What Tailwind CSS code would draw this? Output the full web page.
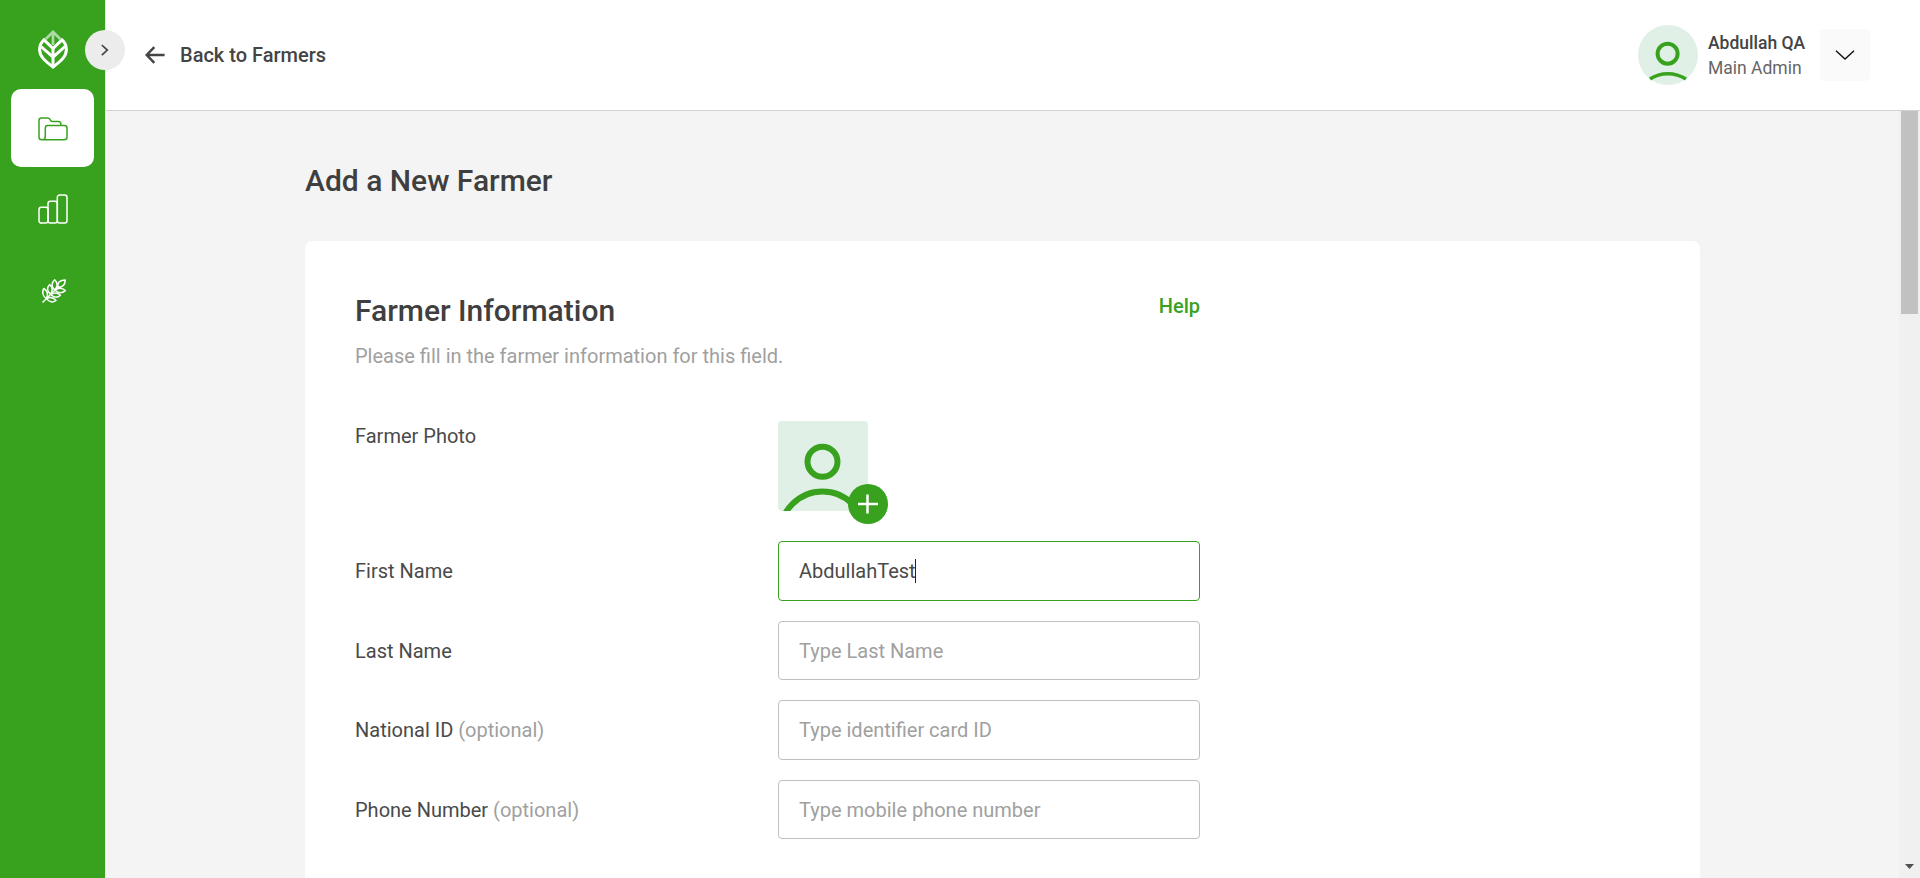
<!DOCTYPE html>
<html lang="en">
<head>
<meta charset="utf-8">
<title>Add a New Farmer</title>
<script src="https://cdn.jsdelivr.net/npm/@tailwindcss/browser@4"></script>
</head>
<body class="font-[Roboto,sans-serif] text-xl/[30px] text-[#4a4a4a] bg-[#f4f4f4]">
<div class="flex h-[878px] w-[1920px] overflow-hidden">
  <aside class="relative z-10 flex w-[106px] shrink-0 flex-col items-center border-r border-[#e8e8e8] bg-[#38a21f]">
    <svg class="mt-[30px] h-[39px] w-[30px] shrink-0" viewBox="0 0 30 39" fill="none" stroke="#fff" stroke-width="3">
      <path d="M15 2V15M7.800 9 15 1.900 22.200 9" stroke="#afdaa5" stroke-width="2.700"/>
      <path d="M15 37C7 31 1.600 26.500 1.600 19.500c0-4 1.500-7 4.400-9.600L15 18.500l9-8.600c2.900 2.600 4.400 5.600 4.400 9.600C28.400 26.500 23 31 15 37z"/>
      <path d="M15 17v20M3 16.500l12 10.700 12-10.700"/>
    </svg>
    <button class="absolute left-[85px] top-[30px] flex size-10 items-center justify-center rounded-full bg-[#ececec]" aria-label="Expand">
      <svg class="size-4" viewBox="0 0 16 16" fill="none" stroke="#444" stroke-width="1.700"><path d="M4.800 3 10.300 8.100 4.800 13.200"/></svg>
    </button>
    <nav class="mt-5 flex flex-col items-center gap-[3px]">
      <a class="flex h-[78px] w-[83px] items-center justify-center rounded-[10px] bg-white pt-px">
        <svg class="h-6 w-[30px]" viewBox="0 0 30 24" fill="none" stroke="#38a21f" stroke-width="1.500" stroke-linejoin="round">
          <path d="M22.800 8V6.700Q22.800 4.500 20.600 4.500H14.500Q12.800 4.500 12.300 3L11.800 2.200Q11.200 1 9.800 1H3.500Q1 1 1 3.500V20Q1 22.800 3.800 22.800H26Q29 22.800 29 20V11.200Q29 8.600 26.400 8.600H9.800Q7.300 8.600 7.300 11.200V19.500Q7.300 22.800 4.500 22.800"/>
        </svg>
      </a>
      <a class="flex h-[78px] w-[83px] items-center justify-center">
        <svg class="size-[30px]" viewBox="0 0 30 30" fill="none" stroke="#fff" stroke-width="1.500">
          <rect x="1" y="13.200" width="9" height="15.900" rx="2.300"/><rect x="10" y="7.200" width="9.300" height="21.900" rx="2.300"/><rect x="19.300" y="1" width="9.700" height="28.100" rx="2.300"/>
        </svg>
      </a>
      <a class="flex h-[80px] w-[83px] items-center justify-center pl-[2px]">
        <svg class="size-6" viewBox="0 0 24 24" fill="none" stroke="#fff" stroke-width="1.500" stroke-linejoin="round">
          <path d="M.5 23.500 17 7"/>
          <path d="M15.500 8.300C15.400 3.500 18 .9 23.200.9 23.200 5.500 20.500 8.300 15.500 8.300z"/>
          <path d="M12.700 11C9 7.500 9.300 3.800 12.700.8 16 4 16 7.600 12.700 11z"/>
          <path d="M8.500 15.200C4.700 12 4.700 8.500 7.700 5.500 10.700 8.400 11.200 11.600 8.500 15.200z"/>
          <path d="M4.300 19.500C.6 17 0 13.300 1.700 9.500 5.500 12 6.500 15.500 4.300 19.500z"/>
          <path d="M13 11.300C16.500 8.500 20 8.600 23.400 11.600 20 14.500 16.300 14.500 13 11.300z"/>
          <path d="M8.800 15.500C12.400 13.200 15.500 13.400 18.500 16.300 15.300 19 12 19 8.800 15.500z"/>
          <path d="M4.600 19.700C8.300 17.600 11.500 18.300 14 21.500 11 23.700 7.200 23.500 4.600 19.700z"/>
        </svg>
      </a>
    </nav>
  </aside>

  <div class="flex min-w-0 flex-1 flex-col">
    <header class="flex h-[111px] shrink-0 items-center justify-between border-b border-[#d2d2d2] bg-white pl-[39px] pr-[50px]">
      <a class="flex items-center gap-[15px] font-medium text-[#444]">
        <svg class="h-[18px] w-5" viewBox="0 0 20 18" fill="none" stroke="#444" stroke-width="2.400"><path d="M19.600 9H1.700M9.300 1.200 1.700 9l7.600 7.800"/></svg>
        <span>Back to Farmers</span>
      </a>
      <div class="flex items-center">
        <svg class="size-[60px]" viewBox="0 0 60 60" fill="none" stroke="#38a21f">
          <circle cx="30" cy="30" r="30" fill="#e1f0e7" stroke="none"/>
          <circle cx="29.600" cy="28.700" r="10" stroke-width="4"/>
          <path d="M12 54Q20 48.700 29.800 48.700T48 54" stroke-width="3.600"/>
        </svg>
        <div class="ml-2.5 w-[112px] pt-0.5 text-[17.500px]/[25px]">
          <div class="font-medium text-[#444]">Abdullah QA</div>
          <div class="text-[#666]">Main Admin</div>
        </div>
        <button class="flex h-[52px] w-[50px] items-center justify-center rounded bg-[#fafafa]" aria-label="Account menu">
          <svg class="h-[10px] w-5" viewBox="0 0 20 10" fill="none" stroke="#111" stroke-width="1.400"><path d="M1 .7 10 9 19 .7"/></svg>
        </button>
      </div>
    </header>

    <div class="flex min-h-0 flex-1">
      <main class="flex-1 overflow-hidden pl-[199px] pt-[47px]">
        <h1 class="text-[30px]/[45px] font-medium text-[#3f3f3f]">Add a New Farmer</h1>
        <section class="mt-[38px] h-[700px] w-[1395px] rounded-lg bg-white pl-[50px] pt-[47px]">
          <div class="w-[845px]">
            <div class="flex items-start justify-between">
              <h2 class="text-[30px]/[45px] font-medium text-[#3f3f3f]">Farmer Information</h2>
              <a class="mt-[3px] font-medium text-[#38a21f]">Help</a>
            </div>
            <p class="mt-2 text-[#a0a0a0]">Please fill in the farmer information for this field.</p>

            <div class="mt-[50px] flex h-[120px]">
              <div class="w-[423px]">Farmer Photo</div>
              <div class="relative size-[90px]">
                <svg class="size-[90px] rounded bg-[#e1f0e7]" viewBox="0 0 90 90" fill="none" stroke="#38a21f" stroke-width="6">
                  <circle cx="44.500" cy="40.700" r="15"/><circle cx="44.500" cy="112.700" r="42.300"/>
                </svg>
                <button class="absolute left-[70px] top-[63px] flex size-10 items-center justify-center rounded-full bg-[#38a21f]" aria-label="Add photo">
                  <svg class="size-5" viewBox="0 0 20 20" stroke="#fff" stroke-width="2.500"><path d="M0 10h20M9.500.5v19"/></svg>
                </button>
              </div>
            </div>

            <div class="flex flex-col gap-5">
              <div class="flex items-center">
                <label class="w-[423px]">First Name</label>
                <div class="flex h-[60px] w-[422px] items-center rounded border border-[#38a21f] pl-5">AbdullahTest<span class="-ml-px h-6 w-px bg-[#222]"></span></div>
              </div>
              <div class="flex items-center">
                <label class="w-[423px]">Last Name</label>
                <div class="flex h-[59px] w-[422px] items-center rounded border border-[#c0c0c0] pl-5 text-[#a0a0a0]">Type Last Name</div>
              </div>
              <div class="flex items-center">
                <label class="w-[423px]">National ID <span class="text-[#a0a0a0]">(optional)</span></label>
                <div class="flex h-[60px] w-[422px] items-center rounded border border-[#c0c0c0] pl-5 text-[#a0a0a0]">Type identifier card ID</div>
              </div>
              <div class="flex items-center">
                <label class="w-[423px]">Phone Number <span class="text-[#a0a0a0]">(optional)</span></label>
                <div class="flex h-[59px] w-[422px] items-center rounded border border-[#c0c0c0] pl-5 text-[#a0a0a0]">Type mobile phone number</div>
              </div>
            </div>
          </div>
        </section>
      </main>
      <div class="flex w-[21px] flex-col items-center justify-between bg-[#f0f0f0] pb-[9px] pr-px">
        <div class="ml-px h-[203px] w-[17px] bg-[#c1c1c1]"></div>
        <svg class="h-[5px] w-[9px]" viewBox="0 0 9 5" fill="#505050"><path d="M0 0h9L4.500 5z"/></svg>
      </div>
    </div>
  </div>
</div>
</body>
</html>
